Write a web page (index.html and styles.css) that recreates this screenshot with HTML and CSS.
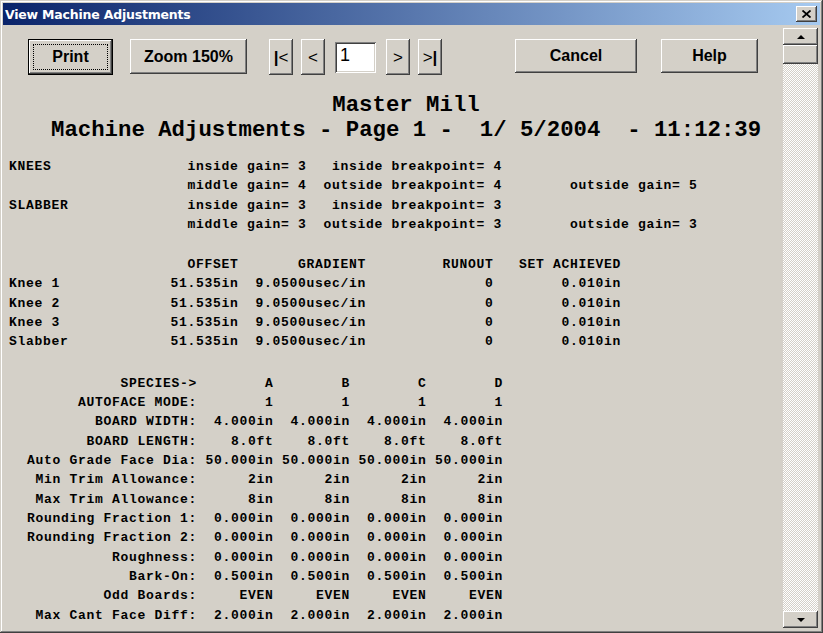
FILE: index.html
```html
<!DOCTYPE html>
<html>
<head>
<meta charset="utf-8">
<link rel="stylesheet" href="styles.css">
</head>
<body>
<div class="window">
  <div class="titlebar">
    <span class="title">View Machine Adjustments</span>
    <div class="close"><svg width="9" height="8" viewBox="0 0 9 8"><path d="M0.5 0.5 L8.5 7.5 M8.5 0.5 L0.5 7.5" stroke="#000" stroke-width="1.8" fill="none"/></svg></div>
  </div>
  <div class="frame">
    <div class="client">
      <div class="toolbar">
        <div class="btn btn-default btn-print"><span class="focus">Print</span></div>
        <div class="btn btn-zoom">Zoom 150%</div>
        <div class="btn btn-nav btn-first"><span class="bar">|</span>&lt;</div>
        <div class="btn btn-nav btn-prev">&lt;</div>
        <div class="page">1</div>
        <div class="btn btn-nav btn-next">&gt;</div>
        <div class="btn btn-nav btn-last">&gt;<span class="bar">|</span></div>
        <div class="btn btn-cancel">Cancel</div>
        <div class="btn btn-help">Help</div>
      </div>
      <div class="report">
        <div class="heading">
          <div class="hline">Master Mill</div>
          <div class="hline">Machine Adjustments - Page 1 -  1/ 5/2004  - 11:12:39</div>
        </div>
<pre class="block gains">KNEES                inside gain= 3   inside breakpoint= 4
                     middle gain= 4  outside breakpoint= 4        outside gain= 5
SLABBER              inside gain= 3   inside breakpoint= 3
                     middle gain= 3  outside breakpoint= 3        outside gain= 3</pre>
<pre class="block heads">                     OFFSET       GRADIENT         RUNOUT   SET ACHIEVED
Knee 1             51.535in  9.0500usec/in              0        0.010in
Knee 2             51.535in  9.0500usec/in              0        0.010in
Knee 3             51.535in  9.0500usec/in              0        0.010in
Slabber            51.535in  9.0500usec/in              0        0.010in</pre>
<pre class="block species">             SPECIES->        A        B        C        D
        AUTOFACE MODE:        1        1        1        1
          BOARD WIDTH:  4.000in  4.000in  4.000in  4.000in
         BOARD LENGTH:    8.0ft    8.0ft    8.0ft    8.0ft
  Auto Grade Face Dia: 50.000in 50.000in 50.000in 50.000in
   Min Trim Allowance:      2in      2in      2in      2in
   Max Trim Allowance:      8in      8in      8in      8in
  Rounding Fraction 1:  0.000in  0.000in  0.000in  0.000in
  Rounding Fraction 2:  0.000in  0.000in  0.000in  0.000in
            Roughness:  0.000in  0.000in  0.000in  0.000in
              Bark-On:  0.500in  0.500in  0.500in  0.500in
           Odd Boards:     EVEN     EVEN     EVEN     EVEN
   Max Cant Face Diff:  2.000in  2.000in  2.000in  2.000in</pre>
      </div>
    </div>
    <div class="scrollbar">
      <div class="sb-btn"><span class="arrow-up"></span></div>
      <div class="sb-thumb"></div>
      <div class="sb-track"></div>
      <div class="sb-btn"><span class="arrow-down"></span></div>
    </div>
  </div>
</div>
</body>
</html>
```
FILE: styles.css
```css
html, body {
  margin: 0;
  padding: 0;
}
body {
  width: 823px;
  height: 633px;
  overflow: hidden;
  background: #d4d0c8;
}
.window {
  box-sizing: border-box;
  width: 823px;
  height: 633px;
  padding: 3px 3px 4px 3px;
  display: flex;
  flex-direction: column;
  background: #d4d0c8;
  box-shadow: inset -1px -1px #404040, inset 1px 1px #d4d0c8, inset -2px -2px #808080, inset 2px 2px #ffffff;
}
.titlebar {
  height: 22px;
  flex: none;
  display: flex;
  align-items: center;
  justify-content: space-between;
  background: linear-gradient(to right, #0a246a, #a6caf0);
  padding: 0 3px 0 2px;
}
.title {
  font-family: "DejaVu Sans", sans-serif;
  font-weight: bold;
  font-size: 12.5px;
  color: #fff;
  letter-spacing: -0.2px;
}
.close {
  width: 21px;
  height: 16px;
  box-sizing: border-box;
  background: #d4d0c8;
  display: flex;
  align-items: center;
  justify-content: center;
  box-shadow: inset -1px -1px #404040, inset 1px 1px #fff, inset -2px -2px #808080, inset 2px 2px #d4d0c8;
}
.frame {
  flex: 1;
  display: flex;
  margin: 0 2px 0 1px;
  min-height: 0;
}
.client {
  flex: 1;
  min-width: 0;
  overflow: hidden;
}
.toolbar {
  display: flex;
  align-items: flex-start;
  padding: 14px 0 0 24px;
}
.btn {
  box-sizing: border-box;
  height: 35px;
  display: flex;
  align-items: center;
  justify-content: center;
  background: #d4d0c8;
  font-family: "Liberation Sans", Arial, sans-serif;
  font-weight: bold;
  font-size: 16px;
  color: #000;
  box-shadow: inset -1px -1px #404040, inset 1px 1px #fff, inset -2px -2px #808080, inset 2px 2px #d4d0c8;
}
.btn-default {
  box-shadow: inset 0 0 0 1px #000, inset -2px -2px #404040, inset 2px 2px #fff, inset -3px -3px #808080;
}
.btn-print {
  width: 85px;
  height: 36px;
  padding: 5px;
}
.focus {
  flex: 1;
  align-self: stretch;
  display: flex;
  align-items: center;
  justify-content: center;
  outline: 1px dotted #000;
  outline-offset: -1px;
}
.btn-zoom {
  width: 117px;
  margin-left: 17px;
}
.btn-nav {
  width: 24px;
  height: 36px;
  font-weight: normal;
  font-size: 17px;
  padding-top: 2px;
}
.bar {
  font-weight: bold;
}
.btn-first {
  margin-left: 22px;
}
.btn-prev {
  margin-left: 8px;
}
.page {
  box-sizing: border-box;
  width: 41px;
  height: 31px;
  margin: 3px 0 0 10px;
  background: #fff;
  padding: 2px 0 0 5px;
  font-family: "Liberation Sans", Arial, sans-serif;
  font-size: 18px;
  line-height: 22px;
  box-shadow: inset 1px 1px #808080, inset -1px -1px #fff, inset 2px 2px #404040, inset -2px -2px #d4d0c8;
}
.btn-next {
  margin-left: 10px;
}
.btn-last {
  margin-left: 8px;
}
.btn-cancel {
  width: 122px;
  height: 34px;
  margin-left: 73px;
}
.btn-help {
  width: 97px;
  height: 34px;
  margin-left: 24px;
}
.report {
  color: #000;
}
.heading {
  margin: 18px 0 0 47px;
  width: 710px;
  text-align: center;
  font-family: "Liberation Mono", "Courier New", monospace;
  font-weight: bold;
  font-size: 22.33px;
  line-height: 25.3px;
}
.hline {
  white-space: pre;
}
.block {
  margin: 0;
  padding-left: 5px;
  font-family: "Liberation Mono", "Courier New", monospace;
  font-weight: bold;
  font-size: 13px;
  letter-spacing: 0.7px;
  line-height: 19.33px;
}
.gains {
  margin-top: 13.4px;
}
.heads {
  margin-top: 20.6px;
}
.species {
  margin-top: 22.3px;
  padding-left: 6px;
}
.scrollbar {
  width: 35px;
  flex: none;
  display: flex;
  flex-direction: column;
  margin: 3px 0 1px 0;
}
.sb-btn, .sb-thumb {
  box-sizing: border-box;
  background: #d4d0c8;
  box-shadow: inset -1px -1px #404040, inset 1px 1px #fff, inset -2px -2px #808080, inset 2px 2px #d4d0c8;
  display: flex;
  align-items: center;
  justify-content: center;
}
.sb-btn {
  height: 17px;
}
.sb-thumb {
  height: 19px;
}
.sb-track {
  flex: 1;
  background-color: #d4d0c8;
  background-image: conic-gradient(#ffffff 25%, #d4d0c8 0 50%, #ffffff 0 75%, #d4d0c8 0);
  background-size: 2px 2px;
}
.arrow-up {
  width: 0;
  height: 0;
  border-left: 4px solid transparent;
  border-right: 4px solid transparent;
  border-bottom: 4px solid #000;
}
.arrow-down {
  width: 0;
  height: 0;
  border-left: 4px solid transparent;
  border-right: 4px solid transparent;
  border-top: 4px solid #000;
}
```
